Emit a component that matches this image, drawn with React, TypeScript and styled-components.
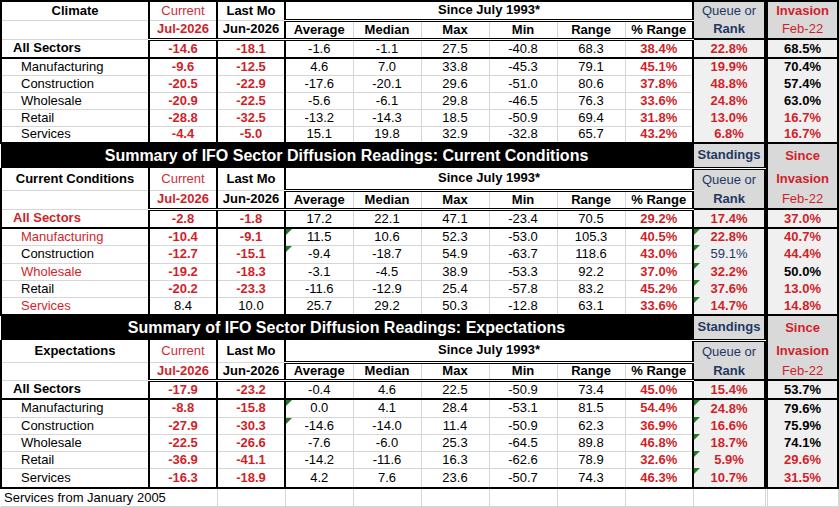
import React from 'react';
import styled, { createGlobalStyle } from 'styled-components';

const GlobalStyle = createGlobalStyle`
  html, body {
    margin: 0;
    padding: 0;
    background: #fff;
  }
  body {
    font-family: "Liberation Sans", Arial, sans-serif;
  }
`;

const RED = '#d11f2a';
const HEAD_RED = '#c92f39';
const NAVY = '#1f3864';
const HEAD_BG = '#d9d9d9';
const SIDE_BG = '#f0f0f0';

type Line = 'thick' | 'double' | 'grid' | 'none';

const line = (l?: Line) => {
  switch (l) {
    case 'thick':
      return '2px solid #000';
    case 'double':
      return '3px double #000';
    case 'grid':
      return '1px solid #d6d6d6';
    default:
      return 'none';
  }
};

const Sheet = styled.table`
  border-collapse: collapse;
  table-layout: fixed;
  width: 837px;
  font-size: 13px;
  color: #000;
`;

const Col = styled.col<{ $w: number }>`
  width: ${(p) => p.$w}px;
`;

const Row = styled.tr<{ $h: number }>`
  height: ${(p) => p.$h}px;
`;

interface CellProps {
  $bold?: boolean;
  $color?: string;
  $align?: 'left' | 'center';
  $indent?: number;
  $bg?: string;
  $t?: Line;
  $b?: Line;
  $l?: Line;
  $r?: Line;
  $flag?: boolean;
}

const Cell = styled.td<CellProps>`
  position: relative;
  padding: 0 0 0 ${(p) => p.$indent ?? 0}px;
  text-align: ${(p) => p.$align ?? 'center'};
  vertical-align: middle;
  white-space: nowrap;
  line-height: 14px;
  font-weight: ${(p) => (p.$bold ? 'bold' : 'normal')};
  color: ${(p) => p.$color ?? '#000'};
  background: ${(p) => p.$bg ?? '#fff'};
  border-top: ${(p) => line(p.$t)};
  border-bottom: ${(p) => line(p.$b)};
  border-left: ${(p) => line(p.$l)};
  border-right: ${(p) => line(p.$r)};

  &::before {
    content: '';
    display: ${(p) => (p.$flag ? 'block' : 'none')};
    position: absolute;
    top: 0;
    left: 0;
    border-top: 6px solid #1e7d22;
    border-right: 6px solid transparent;
  }
`;

const Title = styled.td`
  background: #000;
  color: #fff;
  font-weight: bold;
  font-size: 16px;
  text-align: center;
  vertical-align: middle;
  padding: 0;
  border: none;
  white-space: nowrap;
`;

const Gap = styled.td`
  padding: 0;
  border: none;
  background: #fff;
`;

const Foot = styled.td<{ $l?: boolean }>`
  padding: 0 0 0 3px;
  border-right: 1px solid #d6d6d6;
  border-bottom: 1px solid #d6d6d6;
  white-space: nowrap;
  vertical-align: middle;
  text-align: left;
`;

interface Sector {
  name: string;
  nameRed?: boolean;
  cur: string;
  last: string;
  plain?: boolean;
  stats: string[];
  pct: string;
  queue: string;
  queueNavy?: boolean;
  flagAvg?: boolean;
  flagQueue?: boolean;
  inv: string;
  invRed?: boolean;
}

interface Section {
  title?: string;
  label: string;
  heads: [number, number];
  allH: number;
  dataH: number[];
  allRed?: boolean;
  all: Sector;
  rows: Sector[];
}

const sections: Section[] = [
  {
    label: 'Climate',
    heads: [19, 19],
    allH: 19,
    dataH: [17, 17, 17, 17, 17],
    all: { name: 'All Sectors', cur: '-14.6', last: '-18.1', stats: ['-1.6', '-1.1', '27.5', '-40.8', '68.3'], pct: '38.4%', queue: '22.8%', inv: '68.5%' },
    rows: [
      { name: 'Manufacturing', cur: '-9.6', last: '-12.5', stats: ['4.6', '7.0', '33.8', '-45.3', '79.1'], pct: '45.1%', queue: '19.9%', inv: '70.4%' },
      { name: 'Construction', cur: '-20.5', last: '-22.9', stats: ['-17.6', '-20.1', '29.6', '-51.0', '80.6'], pct: '37.8%', queue: '48.8%', inv: '57.4%' },
      { name: 'Wholesale', cur: '-20.9', last: '-22.5', stats: ['-5.6', '-6.1', '29.8', '-46.5', '76.3'], pct: '33.6%', queue: '24.8%', inv: '63.0%' },
      { name: 'Retail', cur: '-28.8', last: '-32.5', stats: ['-13.2', '-14.3', '18.5', '-50.9', '69.4'], pct: '31.8%', queue: '13.0%', inv: '16.7%', invRed: true },
      { name: 'Services', cur: '-4.4', last: '-5.0', stats: ['15.1', '19.8', '32.9', '-32.8', '65.7'], pct: '43.2%', queue: '6.8%', inv: '16.7%', invRed: true },
    ],
  },
  {
    title: 'Summary of IFO Sector Diffusion Readings: Current Conditions',
    label: 'Current Conditions',
    heads: [22, 19],
    allH: 19,
    dataH: [17, 18, 17, 17, 18],
    allRed: true,
    all: { name: 'All Sectors', cur: '-2.8', last: '-1.8', stats: ['17.2', '22.1', '47.1', '-23.4', '70.5'], pct: '29.2%', queue: '17.4%', inv: '37.0%', invRed: true },
    rows: [
      { name: 'Manufacturing', nameRed: true, cur: '-10.4', last: '-9.1', stats: ['11.5', '10.6', '52.3', '-53.0', '105.3'], pct: '40.5%', queue: '22.8%', flagAvg: true, flagQueue: true, inv: '40.7%', invRed: true },
      { name: 'Construction', cur: '-12.7', last: '-15.1', stats: ['-9.4', '-18.7', '54.9', '-63.7', '118.6'], pct: '43.0%', queue: '59.1%', queueNavy: true, flagAvg: true, flagQueue: true, inv: '44.4%', invRed: true },
      { name: 'Wholesale', nameRed: true, cur: '-19.2', last: '-18.3', stats: ['-3.1', '-4.5', '38.9', '-53.3', '92.2'], pct: '37.0%', queue: '32.2%', flagQueue: true, inv: '50.0%' },
      { name: 'Retail', cur: '-20.2', last: '-23.3', stats: ['-11.6', '-12.9', '25.4', '-57.8', '83.2'], pct: '45.2%', queue: '37.6%', flagQueue: true, inv: '13.0%', invRed: true },
      { name: 'Services', nameRed: true, cur: '8.4', last: '10.0', plain: true, stats: ['25.7', '29.2', '50.3', '-12.8', '63.1'], pct: '33.6%', queue: '14.7%', flagQueue: true, inv: '14.8%', invRed: true },
    ],
  },
  {
    title: 'Summary of IFO Sector Diffusion Readings: Expectations',
    label: 'Expectations',
    heads: [22, 18],
    allH: 19,
    dataH: [18, 17, 17, 17, 20],
    all: { name: 'All Sectors', cur: '-17.9', last: '-23.2', stats: ['-0.4', '4.6', '22.5', '-50.9', '73.4'], pct: '45.0%', queue: '15.4%', inv: '53.7%' },
    rows: [
      { name: 'Manufacturing', cur: '-8.8', last: '-15.8', stats: ['0.0', '4.1', '28.4', '-53.1', '81.5'], pct: '54.4%', queue: '24.8%', flagAvg: true, flagQueue: true, inv: '79.6%' },
      { name: 'Construction', cur: '-27.9', last: '-30.3', stats: ['-14.6', '-14.0', '11.4', '-50.9', '62.3'], pct: '36.9%', queue: '16.6%', flagAvg: true, flagQueue: true, inv: '75.9%' },
      { name: 'Wholesale', cur: '-22.5', last: '-26.6', stats: ['-7.6', '-6.0', '25.3', '-64.5', '89.8'], pct: '46.8%', queue: '18.7%', flagQueue: true, inv: '74.1%' },
      { name: 'Retail', cur: '-36.9', last: '-41.1', stats: ['-14.2', '-11.6', '16.3', '-62.6', '78.9'], pct: '32.6%', queue: '5.9%', flagQueue: true, inv: '29.6%', invRed: true },
      { name: 'Services', cur: '-16.3', last: '-18.9', stats: ['4.2', '7.6', '23.6', '-50.7', '74.3'], pct: '46.3%', queue: '10.7%', flagQueue: true, inv: '31.5%', invRed: true },
    ],
  },
];

const SectorRow: React.FC<{ s: Sector; h: number; isAll?: boolean; isLast?: boolean; red?: boolean }> = ({
  s,
  h,
  isAll,
  isLast,
  red,
}) => {
  const b: Line = isAll || isLast ? 'thick' : 'grid';
  const side: Line = isAll || isLast ? 'thick' : 'none';
  const labelRed = isAll ? red : s.nameRed;
  return (
    <Row $h={h}>
      <Cell
        $align="left"
        $indent={isAll ? 11 : 19}
        $bold={isAll}
        $color={labelRed ? RED : '#000'}
        $l="thick"
        $r="thick"
        $b={b}
      >
        {s.name}
      </Cell>
      <Cell $bold={!s.plain} $color={s.plain ? '#000' : RED} $l="thick" $r="thick" $b={b}>
        {s.cur}
      </Cell>
      <Cell $bold={!s.plain} $color={s.plain ? '#000' : RED} $l="thick" $r="thick" $b={b}>
        {s.last}
      </Cell>
      {s.stats.map((v, i) => (
        <Cell key={i} $flag={i === 0 && s.flagAvg} $l={i === 0 ? 'thick' : 'grid'} $r="grid" $b={b}>
          {v}
        </Cell>
      ))}
      <Cell $bold $color={RED} $l="grid" $r="thick" $b={b}>
        {s.pct}
      </Cell>
      <Cell
        $bg={SIDE_BG}
        $bold={!s.queueNavy}
        $color={s.queueNavy ? NAVY : RED}
        $flag={s.flagQueue}
        $l="thick"
        $r="thick"
        $b={side}
      >
        {s.queue}
      </Cell>
      <Gap />
      <Cell $bg={SIDE_BG} $bold $color={s.invRed ? RED : '#000'} $l="thick" $r="thick" $b={side}>
        {s.inv}
      </Cell>
    </Row>
  );
};

const SectionRows: React.FC<{ s: Section }> = ({ s }) => {
  const top: Line = s.title ? 'none' : 'thick';
  return (
    <>
      {s.title && (
        <Row $h={25}>
          <Title colSpan={9}>{s.title}</Title>
          <Cell $bg={HEAD_BG} $bold $color={NAVY} $t="thick" $b="double" $l="thick" $r="thick">
            Standings
          </Cell>
          <Gap />
          <Cell $bg={HEAD_BG} $bold $color={RED} $t="thick" $l="thick" $r="thick">
            Since
          </Cell>
        </Row>
      )}
      <Row $h={s.heads[0]}>
        <Cell $bold $t={top} $b="grid" $l="thick" $r="thick">
          {s.label}
        </Cell>
        <Cell $color={HEAD_RED} $t={top} $b="grid" $l="thick" $r="thick">
          Current
        </Cell>
        <Cell $bold $t={top} $b="grid" $l="thick" $r="thick">
          Last Mo
        </Cell>
        <Cell colSpan={6} $bold $t={top} $b="double" $l="thick" $r="thick">
          Since July 1993*
        </Cell>
        <Cell $bg={HEAD_BG} $color={NAVY} $t={s.title ? 'double' : 'thick'} $l="thick" $r="thick">
          Queue or
        </Cell>
        <Gap />
        <Cell $bg={HEAD_BG} $bold $color={RED} $t={top} $l="thick" $r="thick">
          Invasion
        </Cell>
      </Row>
      <Row $h={s.heads[1]}>
        <Cell $b="grid" $l="thick" $r="thick" />
        <Cell $bold $color={RED} $b="double" $l="thick" $r="thick">
          Jul-2026
        </Cell>
        <Cell $bold $b="double" $l="thick" $r="thick">
          Jun-2026
        </Cell>
        {['Average', 'Median', 'Max', 'Min', 'Range', '% Range'].map((h, i) => (
          <Cell key={h} $bold $b="double" $l={i === 0 ? 'thick' : 'grid'} $r={i === 5 ? 'thick' : 'grid'}>
            {h}
          </Cell>
        ))}
        <Cell $bg={HEAD_BG} $bold $color={NAVY} $b="thick" $l="thick" $r="thick">
          Rank
        </Cell>
        <Gap />
        <Cell $bg={HEAD_BG} $color={RED} $b="thick" $l="thick" $r="thick">
          Feb-22
        </Cell>
      </Row>
      <SectorRow s={s.all} h={s.allH} isAll red={s.allRed} />
      {s.rows.map((r, i) => (
        <SectorRow key={r.name} s={r} h={s.dataH[i]} isLast={i === s.rows.length - 1} />
      ))}
    </>
  );
};

const App: React.FC = () => {
  return (
    <>
      <GlobalStyle />
      <Sheet>
        <colgroup>
          <Col $w={148} />
          {Array.from({ length: 8 }).map((_, i) => (
            <Col key={i} $w={68} />
          ))}
          <Col $w={72} />
          <Col $w={2} />
          <Col $w={71} />
        </colgroup>
        <tbody>
          {sections.map((s) => (
            <SectionRows key={s.label} s={s} />
          ))}
          <Row $h={18}>
            <Foot colSpan={2}>Services from January 2005</Foot>
            {Array.from({ length: 7 }).map((_, i) => (
              <Foot key={i} />
            ))}
            <Foot />
            <Foot />
            <Foot />
          </Row>
        </tbody>
      </Sheet>
    </>
  );
};

export default App;
